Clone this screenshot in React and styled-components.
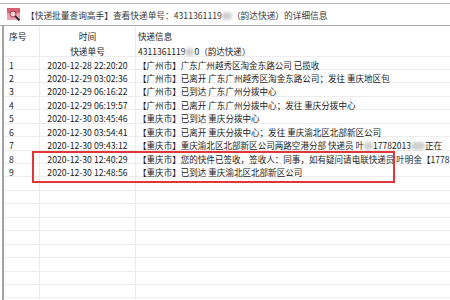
import React from 'react'
import styled, { createGlobalStyle } from 'styled-components'

const GlobalStyle = createGlobalStyle`
    html, body {
        margin: 0;
        padding: 0;
        background: #ffffff;
    }
    body {
        font-family: "Noto Sans CJK SC", "Liberation Sans", sans-serif;
        color: #1b1b1b;
    }
`

const records = [
    ['1', '2020-12-28 22:20:20', '【广州市】广东广州越秀区淘金东路公司 已揽收'],
    ['2', '2020-12-29 03:02:36', '【广州市】已离开 广东广州越秀区淘金东路公司；发往 重庆地区包'],
    ['3', '2020-12-29 06:16:22', '【广州市】已到达 广东广州分拨中心'],
    ['4', '2020-12-29 06:19:57', '【广州市】已离开 广东广州分拨中心；发往 重庆分拨中心'],
    ['5', '2020-12-30 03:45:46', '【重庆市】已到达 重庆分拨中心'],
    ['6', '2020-12-30 03:54:41', '【重庆市】已离开 重庆分拨中心；发往 重庆渝北区北部新区公司'],
    ['7', '2020-12-30 09:43:12', 'courier'],
    ['8', '2020-12-30 12:40:29', '【重庆市】您的快件已签收，签收人：同事，如有疑问请电联快递员 叶明金【1778'],
    ['9', '2020-12-30 12:48:56', '【重庆市】已到达 重庆渝北区北部新区公司'],
]

const AppIcon = () => (
    <svg width="14" height="13" viewBox="0 0 14 13">
        <rect x="0" y="0" width="13" height="12" fill="#e7a3ae" />
        <rect x="0" y="0" width="13" height="5" fill="#d9606f" />
        <circle cx="6" cy="6" r="3" fill="#f4d4d9" stroke="#b03a4a" strokeWidth="1" />
        <line x1="8.2" y1="8.2" x2="12.5" y2="12.5" stroke="#2a2a2a" strokeWidth="1.8" />
    </svg>
)

const App = () => {
    const blanks = Array.from({ length: 10 })

    return (
        <>
            <GlobalStyle />
            <Window>
                <TitleBar>
                    <IconBox><AppIcon /></IconBox>
                    <TitleText>
                        【快递批量查询高手】查看快递单号：4311361119<Blur $w={10} />（韵达快递）的详细信息
                    </TitleText>
                </TitleBar>
                <Grid>
                    <Row $h={17} $line={false}>
                        <Cell>序号</Cell>
                        <Cell $center>时间</Cell>
                        <Cell $info>快递信息</Cell>
                    </Row>
                    <Row $h={13.5}>
                        <Cell />
                        <Cell $center>快递单号</Cell>
                        <Cell $info>4311361119<Blur $w={9} />0（韵达快递）</Cell>
                    </Row>
                    {records.map(([no, time, info]) => (
                        <Row key={no}>
                            <Cell>{no}</Cell>
                            <Cell $center>{time}</Cell>
                            <Cell $info>
                                {info === 'courier' ? (
                                    <>【重庆市】重庆渝北区北部新区公司两路空港分部 快递员 叶<Blur $w={9} />17782013<Blur $w={14} /> 正在</>
                                ) : info}
                            </Cell>
                        </Row>
                    ))}
                    {blanks.map((_, i) => (
                        <Row key={'b' + i}>
                            <Cell />
                            <Cell />
                            <Cell $info />
                        </Row>
                    ))}
                    <Highlight />
                </Grid>
            </Window>
        </>
    )
}

const Window = styled.div`
    width: 450px;
    height: 300px;
    overflow: hidden;
    padding-top: 3px;
    box-sizing: border-box;
    background: #ffffff;
`

const TitleBar = styled.div`
    height: 23px;
    box-sizing: border-box;
    border-top: 1px solid #b4b4b4;
    border-bottom: 1px solid #a8a8a8;
    display: flex;
    align-items: center;
    padding-left: 7px;
    gap: 5px;
`

const IconBox = styled.div`
    width: 14px;
    height: 13px;
    display: flex;
`

const TitleText = styled.span`
    font-size: 8.7px;
    color: #3a3a3a;
    white-space: nowrap;
    display: flex;
    align-items: center;
    padding-top: 2px;
`

const Blur = styled.span`
    display: inline-block;
    width: ${p => p.$w}px;
    height: 8px;
    background: #cfcfcf;
    border-radius: 4px;
    filter: blur(1.5px);
`

const Grid = styled.div`
    position: relative;
    margin-left: 2px;
    border-left: 2px solid #a2a2a2;
    height: 274px;
    overflow: hidden;
`

const Row = styled.div`
    display: grid;
    grid-template-columns: 36px 96px 1fr;
    height: ${p => p.$h || 13.45}px;
    box-sizing: border-box;
    border-bottom: ${p => (p.$line === false ? 'none' : '1px solid #ededed')};
`

const Cell = styled.div`
    font-size: ${p => (p.$info ? 8.55 : 8.7)}px;
    line-height: 9px;
    white-space: nowrap;
    box-sizing: border-box;
    display: flex;
    align-items: center;
    justify-content: ${p => (p.$center ? 'center' : 'flex-start')};
    padding-top: 4px;
    padding-left: ${p => (p.$center ? 0 : p.$info ? 2 : 5)}px;
    border-right: ${p => (p.$info ? 'none' : '1px solid #ebebeb')};
`

const Highlight = styled.div`
    position: absolute;
    left: 28px;
    top: 125px;
    width: 363px;
    height: 32px;
    box-sizing: border-box;
    border: 2px solid #e2363a;
    pointer-events: none;
`

export default App
